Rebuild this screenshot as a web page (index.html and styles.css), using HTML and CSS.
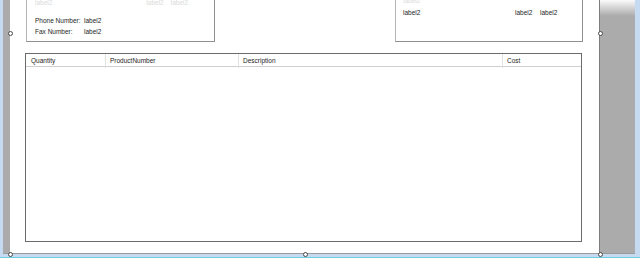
FILE: index.html
```html
<!DOCTYPE html>
<html lang="en">
<head>
    <meta charset="UTF-8">
    <title>Invoice Designer</title>
    <link rel="stylesheet" href="styles.css">
</head>
<body>
    <div class="workspace">
        <div class="surface">
            <div class="form">
                <div class="top-row">
                    <div class="panel panel-left">
                        <div class="faded-row">
                            <span>label2</span>
                            <span class="faded-b">label2</span>
                            <span class="faded-c">label2</span>
                        </div>
                        <div class="field"><span class="caption">Phone Number:</span><span>label2</span></div>
                        <div class="field"><span class="caption">Fax Number:</span><span>label2</span></div>
                    </div>
                    <div class="panel panel-right">
                        <div class="faded-row"><span>label2</span></div>
                        <div class="label-row">
                            <span class="lbl-a">label2</span>
                            <span class="lbl-b">label2</span>
                            <span>label2</span>
                        </div>
                    </div>
                </div>
                <div class="grid">
                    <div class="grid-head">
                        <div class="col col-qty">Quantity</div>
                        <div class="col col-num">ProductNumber</div>
                        <div class="col col-desc">Description</div>
                        <div class="col col-cost">Cost</div>
                    </div>
                </div>
            </div>
            <div class="gutter"></div>
        </div>
        <span class="handle h-left-mid"></span>
        <span class="handle h-right-mid"></span>
        <span class="handle h-left-bot"></span>
        <span class="handle h-mid-bot"></span>
        <span class="handle h-right-bot"></span>
    </div>
</body>
</html>
```

FILE: styles.css
```css
body {
    margin: 0;
    width: 640px;
    height: 258px;
    overflow: hidden;
    font-family: 'Liberation Sans', Arial, sans-serif;
    font-size: 6.5px;
    color: #1e1e1e;
    background-color: #c6dbf1;
}
.workspace {
    position: relative;
    padding: 0 5px 3px 3px;
    border-bottom: 1px solid #6fcfe0;
    background-color: #c6dbf1;
}
.surface {
    display: flex;
    height: 253px;
    padding-left: 7px;
    background-color: #ababab;
    border-bottom: 1px solid #9a9a9a;
}
.form {
    width: 589px;
    background-color: #ffffff;
    border-right: 1px solid #7d7d7d;
    overflow: hidden;
}
.gutter {
    flex: 1;
    background: linear-gradient(to bottom, #fafafa 0, #ababab 16px);
}
.top-row {
    display: flex;
    justify-content: space-between;
    padding: 0 16px;
    margin-top: -20px;
}
.panel {
    box-sizing: border-box;
    height: 62px;
    border: 1px solid #b4b4b4;
    border-right-color: #909090;
    border-bottom-color: #909090;
    line-height: 11px;
}
.panel-left {
    width: 189px;
    padding: 16px 0 0 8px;
}
.panel-right {
    width: 188px;
    padding: 14px 0 0 7px;
}
.faded-row {
    display: flex;
    color: #dadada;
    margin-bottom: 7px;
}
.panel-right .faded-row {
    margin-bottom: 1px;
}
.faded-b {
    margin-left: 94px;
}
.faded-c {
    margin-left: 7px;
}
.field {
    display: flex;
}
.caption {
    width: 49px;
}
.label-row {
    display: flex;
}
.lbl-a {
    width: 112px;
}
.lbl-b {
    width: 25px;
}
.grid {
    box-sizing: border-box;
    height: 189px;
    margin: 11px 17px 0 15px;
    border: 1px solid #6b6b6b;
}
.grid-head {
    display: grid;
    grid-template-columns: 80px 133px 264px 1fr;
    height: 12px;
    line-height: 14px;
    border-bottom: 1px solid #cfcfcf;
}
.col {
    padding-left: 4px;
    border-right: 1px solid #e2e2e2;
}
.col-qty {
    padding-left: 5px;
}
.col-cost {
    border-right: none;
}
.handle {
    position: absolute;
    box-sizing: border-box;
    width: 5px;
    height: 5px;
    border: 1px solid #4a4a4a;
    border-radius: 50%;
    background-color: #ffffff;
}
.h-left-mid { left: 8px; top: 31px; }
.h-right-mid { left: 598px; top: 31px; }
.h-left-bot { left: 8px; top: 252px; }
.h-mid-bot { left: 303px; top: 252px; }
.h-right-bot { left: 598px; top: 252px; }
```
